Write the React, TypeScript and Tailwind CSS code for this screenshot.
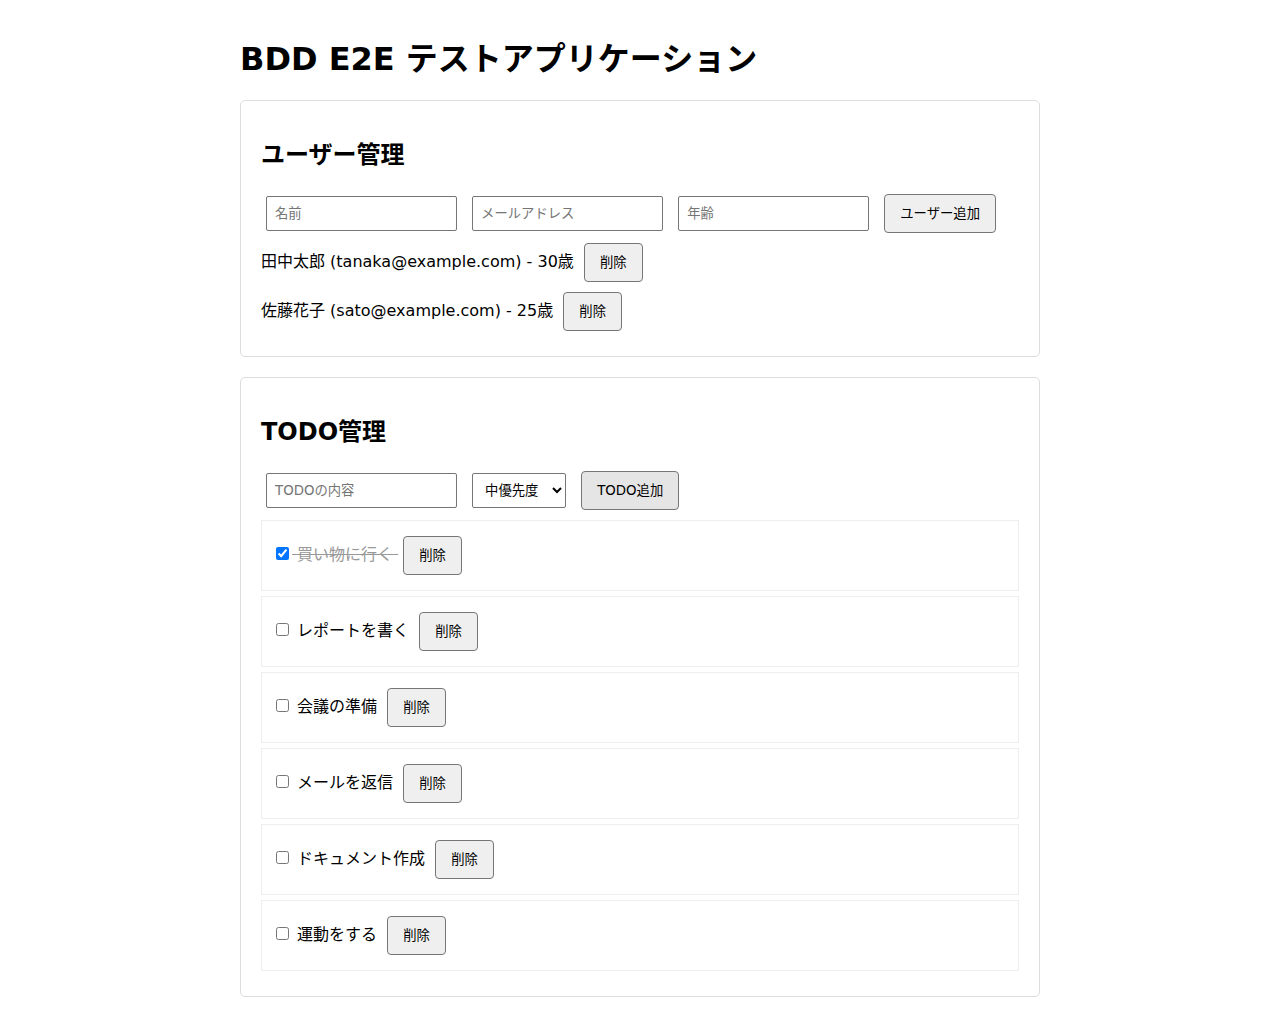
import { useState } from 'react';

/**
 * BDD E2E demo app
 * Plain form page: user list + todo list, browser-default look.
 */

const FONT = "font-['DejaVu_Sans','Noto_Sans_CJK_JP',sans-serif]";

const users = [
  { id: 1, name: '田中太郎', email: 'tanaka@example.com', age: 30 },
  { id: 2, name: '佐藤花子', email: 'sato@example.com', age: 25 },
];

const initialTodos = [
  { id: 1, title: '買い物に行く', done: true },
  { id: 2, title: 'レポートを書く', done: false },
  { id: 3, title: '会議の準備', done: false },
  { id: 4, title: 'メールを返信', done: false },
  { id: 5, title: 'ドキュメント作成', done: false },
  { id: 6, title: '運動をする', done: false },
];

const inputCls =
  'm-[5px] h-[35px] w-[191px] rounded-[2px] border border-[#767676] bg-white px-[8px] text-[13.33px] leading-[15.5px] placeholder:text-[#757575] align-baseline';
const btnCls =
  'm-[5px] h-[39px] rounded-[4px] border border-[#767676] bg-[#efefef] px-[15px] text-[13.33px] leading-[15.5px] text-black align-baseline';

export default function App() {
  const [todos, setTodos] = useState(initialTodos);

  const toggle = (id: number) =>
    setTodos(todos.map((t) => (t.id === id ? { ...t, done: !t.done } : t)));

  return (
    <div className={`${FONT} mx-auto max-w-[840px] bg-white p-[20px] text-[16px] leading-[18.6px] text-black`}>
      <h1 className="my-[21.44px] text-[32px] font-bold leading-[37.25px]">
        BDD E2E テストアプリケーション
      </h1>

      {/* Users */}
      <section className="mb-[20px] rounded-[5px] border border-[#ddd] p-[20px]">
        <h2 className="my-[19.92px] text-[24px] font-bold leading-[28px]">ユーザー管理</h2>
        <div>
          <input className={inputCls} placeholder="名前" />{' '}
          <input className={inputCls} placeholder="メールアドレス" />{' '}
          <input className={inputCls} placeholder="年齢" />{' '}
          <button className={btnCls}>ユーザー追加</button>
        </div>
        {users.map((u) => (
          <div key={u.id}>
            {u.name} ({u.email}) - {u.age}歳{' '}
            <button className={btnCls}>削除</button>
          </div>
        ))}
      </section>

      {/* Todos */}
      <section className="mb-[20px] rounded-[5px] border border-[#ddd] p-[20px]">
        <h2 className="my-[19.92px] text-[24px] font-bold leading-[28px]">TODO管理</h2>
        <div>
          <input className={inputCls} placeholder="TODOの内容" />{' '}
          <select
            defaultValue="medium"
            className="m-[5px] h-[35px] w-[94px] rounded-[2px] border border-[#767676] bg-white px-[8px] text-[13.33px] leading-[15.5px] align-baseline"
          >
            <option value="low">低優先度</option>
            <option value="medium">中優先度</option>
            <option value="high">高優先度</option>
          </select>{' '}
          <button className={`${btnCls} !bg-[#e5e5e5]`}>TODO追加</button>
        </div>
        {todos.map((t) => (
          <div key={t.id} className="my-[5px] border border-[#eee] p-[10px]">
            <input
              type="checkbox"
              checked={t.done}
              onChange={() => toggle(t.id)}
              className="mt-[3px] mr-[3px] mb-[3px] ml-[4px] h-[13px] w-[13px] align-baseline"
            />
            <span className={t.done ? 'text-[#999] line-through' : ''}> {t.title} </span>
            <button className={btnCls}>削除</button>
          </div>
        ))}
      </section>
    </div>
  );
}
